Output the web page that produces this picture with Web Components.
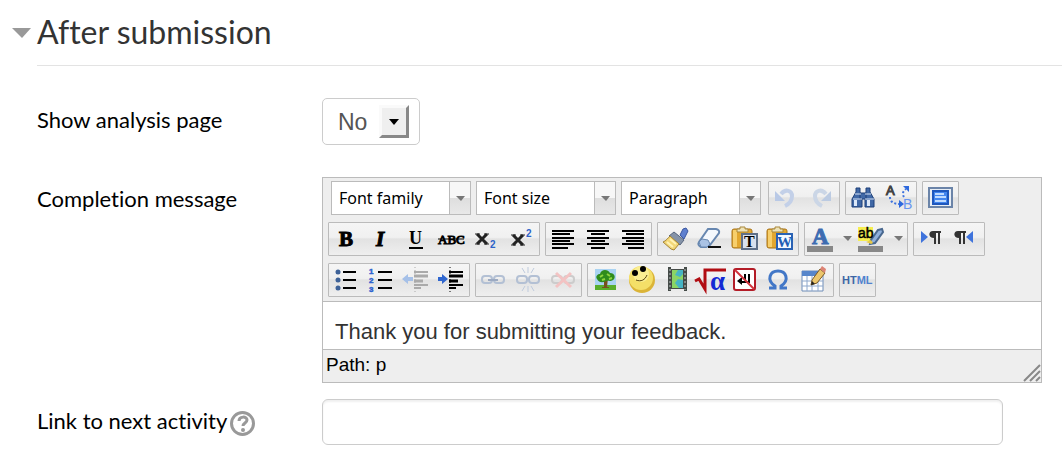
<!DOCTYPE html>
<html lang="en">
<head>
<meta charset="utf-8">
<meta name="viewport" content="width=device-width, initial-scale=1">
<title>After submission</title>
<style>
  body {
    margin: 0;
    background: #fff;
    color: #000;
    font: 22px/30px Lato, "Open Sans", sans-serif;
    font-variant-ligatures: none;
  }
</style>
</head>
<body>

<form-section>
  <span slot="title">After submission</span>

  <form-row>
    <label slot="label" for="analysis">Show analysis page</label>
    <select-box>
      <select id="analysis"><option>No</option><option>Yes</option></select>
    </select-box>
  </form-row>

  <form-row>
    <label slot="label" for="message">Completion message</label>
    <rich-editor>
      <textarea id="message" rows="1">Thank you for submitting your feedback.</textarea>
    </rich-editor>
  </form-row>

  <form-row>
    <label slot="label" for="next">Link to next activity</label>
    <help-button slot="label"></help-button>
    <text-field><input id="next" type="text"></text-field>
  </form-row>
</form-section>

<script>
// Toolbar glyphs, each drawn on the 35x32 face of a button
const link = `
  <g fill="none" stroke="#b3c0d4" stroke-width="2">
    <rect x="6" y="12" width="10" height="7" rx="3"/><rect x="18" y="12" width="10" height="7" rx="3"/>
  </g>`;
const clipboard = `
  <rect x="4" y="6" width="20" height="19" rx="2" fill="#e3a72f" stroke="#a8741b"/>
  <path d="M5 7h4v17h-4z" fill="#f7cf6c"/>
  <path d="M9 9V6h3V4h5v2h3v3z" fill="#eee3b8" stroke="#a8873a"/>`;
const chevron = '<path d="M3 13h9l-4 5z" fill="#777"/>';
const icons = {
  undo: '<path d="M12 12c5-6 11-3 11 2 0 4-3 8-7 10" fill="none" stroke="#c3d0e8" stroke-width="4"/><path d="M6 9v10h10z" fill="#b9c9e6"/>',
  redo: '<path d="M22 12c-5-6-11-3-11 2 0 4 3 8 7 10" fill="none" stroke="#cbd6e6" stroke-width="4"/><path d="M27 9v10h-10z" fill="#bccbe2"/>',
  find: `<g fill="#4068a6" stroke="#1d3f78"><path d="M10 6h4v4l2 6v9H6v-8l4-7zM20 6h4v4l4 7v8h-9v-9l1-6z"/><path d="M14 11h6v6h-6z"/></g>
    <path d="M8 18h3v6h-3zM21 18h3v6h-3z" fill="#dce8f8"/><path d="M9 12h6M19 12h6M7 17h9M19 17h9" stroke="#d5e2f5"/>`,
  replace: `<text x="5" y="13" font-size="13" fill="#444" stroke="#444">A</text><text x="22" y="27" font-size="14" fill="#6794f0">B</text>
    <path d="M9 15c0 5 4 7 10 7M23 15c-2-3-1-6 2-8" fill="none" stroke="#3d72de" stroke-width="2" stroke-dasharray="2 2"/>
    <path d="M18 18v8l5-4zM22 4h6v6z" fill="#2e69dd"/>`,
  full: `<rect x="6" y="6" width="23" height="19" fill="#e8eef5" stroke="#6b84a8" stroke-width="2"/><rect x="10" y="9" width="15" height="13" fill="#4386ee" stroke="#1e57bd" stroke-width="2"/>
    <path d="M12 12h9M12 15h11M12 19h11" stroke="#bfdbff" stroke-width="2"/>`,
  bold: '<text x="10" y="23" class="serif" font-size="21" font-weight="bold" stroke="#000">B</text>',
  italic: '<text x="12" y="23" class="serif" font-size="21" font-weight="bold" font-style="italic" stroke="#000">I</text>',
  underline: '<text x="10" y="21" class="serif" font-size="18" font-weight="bold">U</text><path d="M10 25h14" stroke="#000" stroke-width="2"/>',
  strike: '<text x="4" y="21" class="serif" font-size="13" stroke="#000">ABC</text><path d="M4 16h26" stroke="#000"/>',
  sub: '<path d="M8 11l10 10M18 11l-10 10" stroke="#222" stroke-width="3"/><path d="M6 11h5M15 11h5M6 21h5M15 21h5" stroke="#222"/><text x="21" y="25" font-size="10" font-weight="bold" fill="#2d63c8">2</text>',
  sup: '<path d="M9 12l10 10M19 12l-10 10" stroke="#222" stroke-width="3"/><path d="M7 12h5M16 12h5M7 22h5M16 22h5" stroke="#222"/><text x="22" y="14" font-size="10" font-weight="bold" fill="#2d63c8">2</text>',
  left: '<path d="M6 8h22M6 11h18M6 15h22M6 18h18M6 21h22M6 25h16" stroke="#000" stroke-width="2"/>',
  center: '<path d="M6 8h22M10 11h14M6 15h22M10 18h14M6 21h22M10 25h14" stroke="#000" stroke-width="2"/>',
  right: '<path d="M6 8h22M10 11h18M6 15h22M10 18h18M6 21h22M12 25h16" stroke="#000" stroke-width="2"/>',
  clean: `<path d="M22 12l3-6 3-1 2 3-4 8z" fill="#5f80cf" stroke="#3b57a0"/><path d="M16 9l10 8-4 5-11-9z" fill="#8593a8" stroke="#55647c"/>
    <path d="M12 13l9 8-5 6-3-1-8-7c3-1 5-4 7-6z" fill="#f3d777" stroke="#a58435"/><path d="M9 19l6 5M12 16l6 5" stroke="#fff2b5" stroke-width="2"/>`,
  erase: `<path d="M15 6h8q4 1 3 4l-9 12-4 2H8q-4-2-2-5z" fill="#f4f8fd" stroke="#6787b0" stroke-width="2"/><path d="M6 19l3-3 6 1 2 4-3 3H8z" fill="#a9c2e4" stroke="#6787b0"/>
    <path d="M15 24h13" stroke="#111" stroke-width="2"/>`,
  pastetext: clipboard + '<rect x="14" y="11" width="15" height="15" fill="#d8e1ee" stroke="#5f7088" stroke-width="2"/><text x="16" y="24" class="serif" font-size="16" font-weight="bold">T</text>',
  pasteword: clipboard + '<rect x="14" y="11" width="15" height="15" fill="#f4f8ff" stroke="#2a62b4" stroke-width="2"/><text x="14" y="24" class="serif" font-size="15" font-weight="bold" fill="#1f5db5">W</text>',
  color: '<text x="7" y="21" class="serif" font-size="23" font-weight="bold" fill="#3d6cb1" stroke="#3d6cb1">A</text><path d="M2 23h26v6H2z" fill="#888"/>',
  back: `<path d="M2 4h15v14H2z" fill="#f6ee50"/><path d="M22 7l4-1 1 3-8 11-5 1 1-4z" fill="#8fb0dc" stroke="#49688f" stroke-width="2"/><path d="M10 19l5-2 2 3-2 1z" fill="#e8c947"/>
    <text x="2" y="15" font-size="14" stroke="#000" stroke-width="0.5">ab</text><path d="M2 23h25v6H2z" fill="#888"/>`,
  ltr: '<path d="M7 8l7 6-7 6z" fill="#3f73dc"/><path d="M19 8h8v2h-1v11h-2V10h-2v11h-2v-6c-6 0-6-7-1-7z" fill="#333"/>',
  rtl: '<path d="M24 8l-7 6 7 6z" fill="#3f73dc"/><path d="M9 8h8v2h-1v11h-2V10h-2v11h-2v-6c-6 0-6-7-1-7z" fill="#333"/>',
  bullets: '<g fill="#3e6298"><circle cx="9" cy="8" r="2.5"/><circle cx="9" cy="16" r="2.5"/><circle cx="9" cy="24" r="2.5"/></g><path d="M14 8h13M14 16h13M14 24h13" stroke="#000" stroke-width="2"/>',
  numbers: '<g font-size="8" font-weight="bold" fill="#2d63d0" stroke="#2d63d0" stroke-width="0.5"><text x="5" y="10">1</text><text x="5" y="19">2</text><text x="5" y="28">3</text></g><path d="M14 8h14M14 16h14M14 24h14" stroke="#000" stroke-width="2"/>',
  outdent: '<g stroke="#aaa"><path d="M16 3v26" stroke-dasharray="1 2"/><path d="M15 8h14M15 21h14M15 24h7" stroke-width="2"/><path d="M15 12h14M15 17h9" stroke-width="3"/></g><path d="M3 15l6-5v3h5v4H9v3z" fill="#a5c0e8"/>',
  indent: '<g stroke="#000"><path d="M16 3v26" stroke-dasharray="1 2"/><path d="M15 8h14M15 21h14M15 24h7" stroke-width="2"/><path d="M15 12h14M15 17h9" stroke-width="3"/></g><path d="M14 15l-6-5v3H4v4h4v3z" fill="#2f66cf"/>',
  link: link + '<path d="M12 16h10" stroke="#9caac2" stroke-width="2"/>',
  unlink: link + '<path d="M17 3v6M11 4l3 5M23 4l-3 5M17 22v6M11 27l3-5M23 27l-3-5" stroke="#bfcbdd"/>',
  nolink: link.replace('#b3c0d4', '#ccc') + '<path d="M10 9l15 14M25 9l-15 14" stroke="#f3c3c3" stroke-width="3"/>',
  image: `<path d="M7 5h21v21H7z" fill="#a9d3f2"/><path d="M7 21h21v5H7z" fill="#58ad2b"/><path d="M16 14h4l-1 9h2v1h-7v-1h2z" fill="#76501f"/>
    <path d="M9 15c-2-3 1-5 3-5 1-5 8-5 10-1 5 0 6 5 3 7-3 2-5 0-7 1-3 2-7 2-9-2z" fill="#2f8c1c"/><path d="M12 13l3-2M19 10l3 2M21 15l3-1M14 16l3-1" stroke="#8fd63f" stroke-width="2"/>`,
  smile: `<circle cx="19" cy="16" r="13" fill="#dbb437"/><circle cx="18" cy="14" r="12" fill="#f4df68"/><circle cx="18" cy="10" r="8" fill="#faee92"/>
    <circle cx="12" cy="9" r="3"/><circle cx="20" cy="5" r="3"/><path d="M13 16c5 2 9 0 11-5" fill="none" stroke="#57430d"/>`,
  media: `<path d="M10 3h3v2h13V3h3v24h-3v-2H13v2h-3z" fill="#454b48"/><path d="M14 6h11v18H14z" fill="#47b5c5"/><path d="M14 6h6l-3 5 5 2 3-3v6l-5-1-3 4 4 5h-7z" fill="#8bd565"/>
    <path d="M12 5v21M27 5v21" stroke="#bdc6c2" stroke-dasharray="2 2"/>`,
  math: '<path d="M2 17l4-2 6 10V6h21" fill="none" stroke="#b10d13" stroke-width="3"/><text x="17" y="26" class="serif" font-size="27" font-weight="bold" fill="#1429d4">α</text>',
  nobreak: `<rect x="6" y="5" width="21" height="21" rx="2" fill="#fff" stroke="#b31c27" stroke-width="2"/><path d="M21 10v8h-8M17 10v6" fill="none" stroke="#000" stroke-width="2"/>
    <path d="M9 17l5-4v8z"/><path d="M7 6l19 19" stroke="#d2333d" stroke-width="2"/>`,
  omega: '<path d="M6 24h6v-2c-9-6-5-15 3-15s12 9 3 15v2h6" fill="none" stroke="#4277c7" stroke-width="3"/>',
  table: `<path d="M4 7h21v20H4z" fill="#fff" stroke="#6e8db8"/><path d="M4 7h21v5H4z" fill="#5786cb"/><path d="M4 17h21M4 22h21M9 12v15M14 12v15M20 12v15" stroke="#8ea8cc"/>
    <path d="M14 16l8-11 5 4-8 10-6 2z" fill="#ecc66c" stroke="#7b5a28"/><path d="M22 5l2-3 4 3-1 4z" fill="#dd8475"/><path d="M13 21l1-4 3 3z" fill="#222"/>`,
  html: '<text x="2" y="20" font-size="11" font-weight="bold" fill="#3d66a5">HT<tspan fill="#4f82cf">ML</tspan></text>',
  more: chevron
};

// name and accessible label for every button, split into rows of groups
const rows = [
  [
    ['undo Undo', 'redo Redo'],
    ['find Find', 'replace Find and replace'],
    ['full Toggle full screen']
  ],
  [
    ['bold Bold', 'italic Italic', 'underline Underline', 'strike Strikethrough', 'sub Subscript', 'sup Superscript'],
    ['left Align left', 'center Align center', 'right Align right'],
    ['clean Clean up code', 'erase Remove formatting', 'pastetext Paste as plain text', 'pasteword Paste from Word'],
    ['color Text color', 'more Choose text color', 'back Background color', 'more Choose background color'],
    ['ltr Left to right', 'rtl Right to left']
  ],
  [
    ['bullets Unordered list', 'numbers Ordered list', 'outdent Outdent', 'indent Indent'],
    ['link Insert link', 'unlink Unlink', 'nolink Prevent automatic linking'],
    ['image Insert image', 'smile Insert emoticon', 'media Insert media', 'math Insert equation', 'nobreak Insert non-breaking space', 'omega Insert character', 'table Insert table'],
    ['html Edit HTML source']
  ]
];

class FormSection extends HTMLElement {
  constructor() {
    super();
    this.attachShadow({mode: 'open'}).innerHTML = `
      <style>
        :host { display: block; padding: 0 0 24px 12px; }
        header { display: flex; align-items: center; }
        button { width: 25px; padding: 0; border: 0; background: none; display: flex; }
        h2 {
          flex: 1;
          margin: 0;
          padding: 12px 0 13px;
          border-bottom: 1px solid #e3e3e3;
          color: #333;
          font-size: 32px;
          font-weight: 400;
          line-height: 40px;
        }
        .rows { padding: 32px 20px 0 25px; }
      </style>
      <header>
        <button type="button" aria-label="Collapse section" aria-expanded="true">
          <svg width="20" height="10"><path d="M0 0h19l-9 10z" fill="#999"/></svg>
        </button>
        <h2><slot name="title"></slot></h2>
      </header>
      <div class="rows"><slot></slot></div>`;
  }
}

class FormRow extends HTMLElement {
  constructor() {
    super();
    this.attachShadow({mode: 'open'}).innerHTML = `
      <style>
        :host { display: grid; grid-template-columns: 285px minmax(0, 1fr); }
        .label { display: flex; align-items: flex-start; gap: 3px; padding-top: 7px; }
      </style>
      <div class="label"><slot name="label"></slot></div>
      <div><slot></slot></div>`;
  }
}

class SelectBox extends HTMLElement {
  constructor() {
    super();
    this.attachShadow({mode: 'open'}).innerHTML = `
      <style>
        :host { display: inline-grid; margin-bottom: 32px; vertical-align: top; }
        ::slotted(select) {
          grid-area: 1 / 1;
          appearance: none;
          width: 98px;
          height: 47px;
          padding: 0 40px 0 15px;
          border: 1px solid #ccc;
          border-radius: 5px;
          background: #fff;
          color: #555;
          font: 23px "Liberation Sans", sans-serif;
        }
        .arrow {
          grid-area: 1 / 1;
          place-self: center end;
          z-index: 1;
          box-sizing: border-box;
          width: 30px;
          height: 33px;
          margin-right: 11px;
          border: 3px solid;
          border-color: #fafafa #888 #888 #fafafa;
          background: #efefef;
          display: grid;
          place-items: center;
          pointer-events: none;
        }
      </style>
      <slot></slot>
      <span class="arrow"><svg width="10" height="6"><path d="M0 0h10l-5 6z"/></svg></span>`;
  }
}

class TextField extends HTMLElement {
  constructor() {
    super();
    this.attachShadow({mode: 'open'}).innerHTML = `
      <style>
        :host { display: block; margin-right: 39px; }
        ::slotted(input) {
          box-sizing: border-box;
          display: block;
          width: 100%;
          height: 46px;
          padding: 0 12px;
          border: 1px solid #ccc;
          border-radius: 6px;
          box-shadow: inset 0 2px 2px #f0f0f0;
          color: #555;
          font: 23px "Liberation Sans", sans-serif;
        }
      </style>
      <slot></slot>`;
  }
}

class HelpButton extends HTMLElement {
  constructor() {
    super();
    this.attachShadow({mode: 'open'}).innerHTML = `
      <style>
        :host { display: block; padding-top: 5px; }
        button { display: block; padding: 0; border: 0; background: none; }
        svg { display: block; }
      </style>
      <button type="button" aria-label="Help with Link to next activity">
        <svg width="25" height="25" fill="none" stroke="#999">
          <circle cx="12.5" cy="12.5" r="11" stroke-width="3"/>
          <path d="M9 10c0-5 8-5 8-1 0 3-4 3-4 6" stroke-width="3"/>
          <circle cx="13" cy="19" r="2" fill="#999" stroke="none"/>
        </svg>
      </button>`;
  }
}

class ToolSelect extends HTMLElement {
  constructor() {
    super();
    const label = this.getAttribute('label');
    this.attachShadow({mode: 'open'}).innerHTML = `
      <style>
        :host { display: grid; width: 140px; height: 34px; }
        select {
          grid-area: 1 / 1;
          appearance: none;
          width: 100%;
          padding: 0 24px 0 7px;
          border: 1px solid #bbb;
          border-radius: 0;
          background: #fff;
          color: #000;
          font: 16px "Noto Sans", sans-serif;
        }
        span {
          grid-area: 1 / 1;
          justify-self: end;
          z-index: 1;
          width: 20px;
          border: 1px solid #bbb;
          background: linear-gradient(#f7f7f7 50%, #dedede 50%, #e8e8e8);
          display: grid;
          place-items: center;
          pointer-events: none;
        }
      </style>
      <select aria-label="${label}"><option>${label}</option></select>
      <span><svg width="9" height="5"><path d="M0 0h9l-4 5z" fill="#777"/></svg></span>`;
  }
}

class ToolButton extends HTMLElement {
  constructor() {
    super();
    this.attachShadow({mode: 'open'});
  }

  connectedCallback() {
    const icon = this.getAttribute('icon');
    const width = icon === 'more' ? 16 : 35;
    this.shadowRoot.innerHTML = `
      <style>
        :host { display: block; }
        button {
          display: block;
          padding: 0;
          border: 0;
          background: linear-gradient(#f5f5f5, #f0f0f0 45%, #e2e2e2 50%, #efefef);
        }
        svg { display: block; font-family: "Liberation Sans", sans-serif; }
        .serif { font-family: "Liberation Serif", serif; }
      </style>
      <button type="button" aria-label="${this.getAttribute('label')}">
        <svg width="${width}" height="32" aria-hidden="true">${icons[icon]}</svg>
      </button>`;
  }
}

class ToolGroup extends HTMLElement {
  constructor() {
    super();
    this.attachShadow({mode: 'open'}).innerHTML = `
      <style>
        :host {
          display: flex;
          border: 1px solid #bbb;
          border-radius: 1px;
        }
      </style>
      <slot></slot>`;
  }
}

class RichEditor extends HTMLElement {
  constructor() {
    super();
    const group = names => `<tool-group>${names.map(name => {
      const [icon, ...label] = name.split(' ');
      return `<tool-button icon="${icon}" label="${label.join(' ')}"></tool-button>`;
    }).join('')}</tool-group>`;
    const [first, ...rest] = rows.map(row => row.map(group).join(''));

    this.attachShadow({mode: 'open'}).innerHTML = `
      <style>
        :host { display: block; border: 1px solid #bbb; margin-bottom: 16px; }
        .toolbar {
          display: flex;
          flex-direction: column;
          gap: 7px;
          padding: 3px 5px 4px;
          border-bottom: 1px solid #bbb;
          background: #eee;
        }
        .row { display: flex; gap: 5px; }
        .selects { display: flex; gap: 5px; padding: 0 2px 0 3px; }
        ::slotted(textarea) {
          box-sizing: border-box;
          display: block;
          width: 100%;
          height: 47px;
          padding: 16px 12px 0;
          border: 0;
          resize: none;
          overflow: hidden;
          background: #fff;
          color: #333;
          font: 22px/28px "Liberation Sans", sans-serif;
        }
        footer {
          display: flex;
          justify-content: space-between;
          align-items: flex-end;
          border-top: 1px solid #bbb;
          background: #eee;
          font: 19px/32px "Liberation Sans", sans-serif;
          padding-left: 3px;
        }
        footer span { margin-top: -1px; padding-bottom: 1px; }
        footer svg { display: block; }
      </style>
      <div class="toolbar" role="toolbar" aria-label="Formatting">
        <div class="row">
          <div class="selects">
            <tool-select label="Font family"></tool-select>
            <tool-select label="Font size"></tool-select>
            <tool-select label="Paragraph"></tool-select>
          </div>
          ${first}
        </div>
        ${rest.map(row => `<div class="row">${row}</div>`).join('')}
      </div>
      <slot></slot>
      <footer>
        <span>Path: p</span>
        <svg width="18" height="18"><path d="M1 17L17 1M7 17L17 7M13 17l4-4" stroke="#888" stroke-width="2"/></svg>
      </footer>`;
  }
}

customElements.define('tool-select', ToolSelect);
customElements.define('tool-button', ToolButton);
customElements.define('tool-group', ToolGroup);
customElements.define('rich-editor', RichEditor);
customElements.define('select-box', SelectBox);
customElements.define('text-field', TextField);
customElements.define('help-button', HelpButton);
customElements.define('form-row', FormRow);
customElements.define('form-section', FormSection);
</script>
</body>
</html>
